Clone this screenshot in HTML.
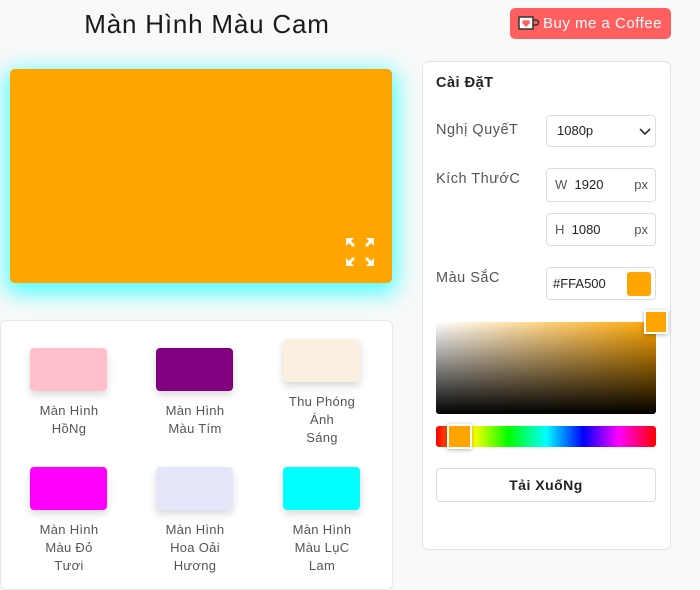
<!DOCTYPE html>
<html><head><meta charset="utf-8"><style>
*{box-sizing:border-box;margin:0;padding:0}
body{width:700px;height:580px;background:#f8f9f9;font-family:"Liberation Sans","DejaVu Sans",sans-serif;color:#333;position:relative;overflow:hidden}
.abs{position:absolute}
h1{position:absolute;left:0;width:414px;top:9px;text-align:center;font-weight:400;font-size:26px;letter-spacing:0.8px;color:#1a1a1a}
.bmc{left:510px;top:8px;width:161px;height:31px;background:#ff5f5f;border-radius:5px;color:#fff;font-size:15px;letter-spacing:0.5px;line-height:32px;padding-left:33px}
.scr{left:10px;top:69px;width:382px;height:214px;background:#ffa500;border-radius:5px;box-shadow:0 6px 22px 4px rgba(0,255,255,.7)}
.grid{left:0;top:320px;width:393px;height:270px;background:#fff;border:1px solid #e8e8e8;border-radius:6px}
.sw{position:absolute;width:77px;height:43px;border-radius:4px;box-shadow:0 4px 8px rgba(0,0,0,.15)}
.lb{position:absolute;width:120px;text-align:center;font-size:13px;letter-spacing:0.3px;line-height:18px;color:#555}
.panel{left:422px;top:61px;width:249px;height:489px;background:#fff;border:1px solid #e3e3e3;border-radius:6px}
.lab{position:absolute;font-size:14.5px;letter-spacing:0.5px;color:#555}
.inp{position:absolute;border:1px solid #ddd;border-radius:4px;background:#fff;font-size:13px;color:#222}
</style></head><body>
<h1>Màn Hình Màu Cam</h1>
<div class="abs bmc"><svg class="abs" style="left:8px;top:8px" width="22" height="15" viewBox="0 0 22 15"><rect x="1" y="1" width="14" height="12" fill="#fff" stroke="#333" stroke-width="1.5"/><path d="M15 4h3a2.5 2.5 0 0 1 0 5h-3" fill="none" stroke="#333" stroke-width="1.5"/><path d="M8 11L4.5 7.5a2 2 0 0 1 3.5-2.5a2 2 0 0 1 3.5 2.5z" fill="#ff5f5f"/></svg>Buy me a Coffee</div>
<div class="abs scr"><svg class="abs" style="left:336px;top:169px" width="28" height="28" viewBox="0 0 28 28" fill="#fff"><path d="M0 0h8l-3 3 4 4-2 2-4-4-3 3z"/><path d="M28 0h-8l3 3-4 4 2 2 4-4 3 3z"/><path d="M0 28h8l-3-3 4-4-2-2-4 4-3-3z"/><path d="M28 28h-8l3-3-4-4 2-2 4 4 3-3z"/></svg></div>
<div class="abs grid">
<div class="sw" style="left:29px;top:27px;background:#ffc0cb"></div>
<div class="sw" style="left:155px;top:27px;background:#800080"></div>
<div class="sw" style="left:282px;top:18px;background:#faf0e0"></div>
<div class="lb" style="left:8px;top:81px">Màn Hình<br>HồNg</div>
<div class="lb" style="left:134px;top:81px">Màn Hình<br>Màu Tím</div>
<div class="lb" style="left:261px;top:72px">Thu Phóng<br>Ánh<br>Sáng</div>
<div class="sw" style="left:29px;top:146px;background:#ff00ff"></div>
<div class="sw" style="left:155px;top:146px;background:#e6e6fa"></div>
<div class="sw" style="left:282px;top:146px;background:#00ffff"></div>
<div class="lb" style="left:8px;top:200px">Màn Hình<br>Màu Đỏ<br>Tươi</div>
<div class="lb" style="left:134px;top:200px">Màn Hình<br>Hoa Oải<br>Hương</div>
<div class="lb" style="left:261px;top:200px">Màn Hình<br>Màu LụC<br>Lam</div>
</div>
<div class="abs panel"></div>
<div class="lab" style="left:436px;top:75px;font-weight:bold;color:#222">Cài ĐặT</div>
<div class="lab" style="left:436px;top:122px">Nghị QuyếT</div>
<div class="inp" style="left:546px;top:115px;width:110px;height:32px;line-height:30px;padding-left:10px">1080p<svg class="abs" style="left:92px;top:12px" width="12" height="8" viewBox="0 0 12 8"><path d="M1 1l5 5 5-5" fill="none" stroke="#333" stroke-width="1.6"/></svg></div>
<div class="lab" style="left:436px;top:171px">Kích ThướC</div>
<div class="inp" style="left:546px;top:168px;width:110px;height:34px;line-height:32px;padding-left:8px"><span style="color:#555">W</span>&nbsp; 1920<span class="abs" style="right:7px;color:#555">px</span></div>
<div class="inp" style="left:546px;top:213px;width:110px;height:33px;line-height:31px;padding-left:8px"><span style="color:#555">H</span>&nbsp; 1080<span class="abs" style="right:7px;color:#555">px</span></div>
<div class="lab" style="left:436px;top:270px">Màu SắC</div>
<div class="inp" style="left:546px;top:267px;width:110px;height:33px;line-height:31px;padding-left:6px">#FFA500<div class="abs" style="left:80px;top:4px;width:24px;height:24px;background:#ffa500;border-radius:3px"></div></div>
<div class="abs" style="left:436px;top:322px;width:220px;height:92px;border-radius:3px;background:linear-gradient(to top,#000,transparent),linear-gradient(to right,#fff,#ffa500)"></div>
<div class="abs" style="left:644px;top:310px;width:24px;height:24px;background:#ffa500;border:2px solid #fff;box-shadow:0 1px 4px rgba(0,0,0,.3)"></div>
<div class="abs" style="left:436px;top:426px;width:220px;height:21px;border-radius:3px;background:linear-gradient(to right,#f00,#ff0 17%,#0f0 33%,#0ff 50%,#00f 67%,#f0f 83%,#f00)"></div>
<div class="abs" style="left:447px;top:424px;width:25px;height:25px;background:#ffa500;border:2px solid #fff;box-shadow:0 1px 4px rgba(0,0,0,.3)"></div>
<div class="abs" style="left:436px;top:468px;width:220px;height:34px;border:1px solid #ddd;border-radius:4px;text-align:center;line-height:32px;font-size:14px;letter-spacing:0.5px;font-weight:bold;color:#222">Tải XuốNg</div>
</body></html>
